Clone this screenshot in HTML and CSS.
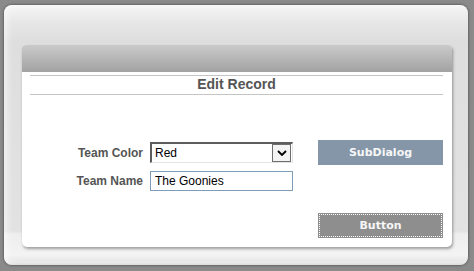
FILE: index.html
```html
<!DOCTYPE html>
<html lang="en">
<head>
    <meta charset="UTF-8">
    <title>Edit Record</title>
    <link rel="stylesheet" href="styles.css">
</head>
<body>
    <div class="frame">
        <div class="dialog">
            <div class="dialog-header"></div>
            <div class="dialog-body">
                <h1 class="title">Edit Record</h1>
                <div class="form">
                    <label class="label" for="team-color">Team Color</label>
                    <div class="select-wrap">
                        <select id="team-color" class="select">
                            <option>Red</option>
                            <option>Blue</option>
                            <option>Green</option>
                        </select>
                        <span class="select-arrow">
                            <svg width="10" height="6" viewBox="0 0 10 6"><path d="M1 1 L5 5 L9 1" fill="none" stroke="#000" stroke-width="1.8"/></svg>
                        </span>
                    </div>
                    <button class="btn btn-sub">SubDialog</button>

                    <label class="label" for="team-name">Team Name</label>
                    <input type="text" id="team-name" class="text-input" value="The Goonies">
                    <span></span>

                    <button class="btn btn-main">Button</button>
                </div>
            </div>
        </div>
    </div>
</body>
</html>
```

FILE: styles.css
```css
html, body {
    margin: 0;
    padding: 0;
    height: 100%;
}
body {
    background: #8a8a8a;
    font-family: "Liberation Sans", Arial, sans-serif;
    padding: 5px 6px 0 4px;
    box-sizing: border-box;
}
.frame {
    height: 260px;
    border-radius: 8px;
    background: linear-gradient(#f6f6f6 0, #e6e6e6 18px, #dedede 36px, #e2e2e2 226px, #eeeeee 229px, #f3f3f3 250px, #e4e4e4 258px, #cfcfcf 260px);
    box-shadow: 0 0 2px 1px #666, inset 4px 0 6px rgba(255,255,255,0.5);
    padding: 40px 16px 0 18px;
    box-sizing: border-box;
}
.dialog {
    width: 430px;
    height: 202px;
    border-radius: 4px 4px 5px 5px;
    background: #fff;
    box-shadow: 1px 2px 3px rgba(0,0,0,0.35);
    overflow: hidden;
}
.dialog-header {
    height: 27px;
    background: linear-gradient(#cacaca, #a2a2a2);
}
.dialog-body {
    padding: 3px 9px 0 8px;
}
.title {
    margin: 0;
    height: 18px;
    line-height: 17px;
    border-top: 1px solid #c4c4c4;
    border-bottom: 1px solid #c4c4c4;
    text-align: center;
    font-size: 14px;
    font-weight: bold;
    color: #555;
}
.form {
    margin-top: 45px;
    display: grid;
    grid-template-columns: 120px 168px 125px;
    grid-template-rows: 25px 20px 41px;
    row-gap: 6px;
    align-items: center;
}
.label {
    text-align: right;
    padding-right: 7px;
    font-size: 12px;
    font-weight: bold;
    color: #555;
}
.select-wrap {
    position: relative;
    width: 143px;
    height: 21px;
}
.select {
    appearance: none;
    -webkit-appearance: none;
    width: 143px;
    height: 21px;
    margin: 0;
    padding: 0 0 0 3px;
    border-style: solid;
    border-width: 2px 1px 1px 2px;
    border-color: #5c5c5c #e4e4e4 #e4e4e4 #5c5c5c;
    background: #fff;
    font-family: "Liberation Sans", Arial, sans-serif;
    font-size: 12px;
    color: #000;
    border-radius: 0;
    outline: none;
}
.select-arrow {
    position: absolute;
    top: 2px;
    right: 2px;
    width: 17px;
    height: 16px;
    border: 1px solid #6e6e6e;
    background: #f4f4f4;
    display: flex;
    align-items: center;
    justify-content: center;
}
.text-input {
    width: 143px;
    height: 20px;
    box-sizing: border-box;
    margin: 0;
    padding: 0 4px;
    border: 1px solid #7f9db9;
    font-family: "Liberation Sans", Arial, sans-serif;
    font-size: 12px;
    color: #000;
    outline: none;
}
.btn {
    width: 125px;
    height: 25px;
    margin: 0;
    padding: 0;
    border: none;
    border-radius: 0;
    color: #f6f6f6;
    font-family: "DejaVu Sans", Verdana, sans-serif;
    font-size: 11px;
    font-weight: bold;
    cursor: pointer;
}
.btn-sub {
    background-color: #8596a9;
}
.btn-main {
    background-color: #8e8e8e;
    outline: 1px dotted #fff;
    outline-offset: -2px;
    align-self: end;
    grid-row: 3;
    grid-column: 3;
}
```
